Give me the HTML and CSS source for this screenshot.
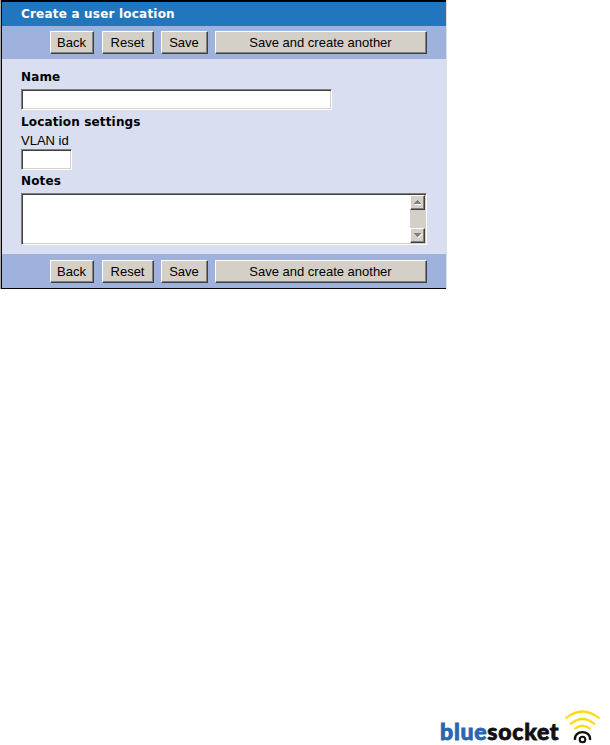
FILE: index.html
```html
<!DOCTYPE html>
<html>
<head>
    <meta charset="utf-8">
    <title>Create a user location</title>
    <link rel="stylesheet" href="styles.css">
</head>
<body>
<form class="panel">
    <h1>Create a user location</h1>
    <div class="toolbar">
        <button type="button" class="back">Back</button>
        <button type="reset" class="reset">Reset</button>
        <button type="submit" class="save">Save</button>
        <button type="submit" class="another">Save and create another</button>
    </div>
    <div class="fields">
        <label class="title" for="name">Name</label>
        <input type="text" id="name" class="name">
        <h2 class="title settings">Location settings</h2>
        <label class="vlan-label" for="vlan">VLAN id</label>
        <input type="text" id="vlan" class="vlan">
        <label class="title notes-label" for="notes">Notes</label>
        <div class="notes">
            <textarea id="notes"></textarea>
            <div class="scrollbar">
                <span class="arrow"><svg width="7" height="5" viewBox="0 0 7 5" shape-rendering="crispEdges"><path d="M1 4h6v1H1z" fill="#fff"/><path d="M3 0h1v1h1v1h1v1h1v1H0V3h1V2h1V1h1z" fill="#808080"/></svg></span>
                <span class="arrow"><svg width="8" height="5" viewBox="0 0 8 5" shape-rendering="crispEdges"><path d="M7 1h1L4 5V4z" fill="#fff"/><path d="M0 0h7v1H6v1H5v1H4v1H3V3H2V2H1V1H0z" fill="#808080"/></svg></span>
            </div>
        </div>
    </div>
    <div class="toolbar bottom">
        <button type="button" class="back">Back</button>
        <button type="reset" class="reset">Reset</button>
        <button type="submit" class="save">Save</button>
        <button type="submit" class="another">Save and create another</button>
    </div>
</form>

<div class="logo">
    <span class="word"><span class="blue">blue</span>socket</span>
    <svg class="waves" width="38" height="36" viewBox="0 0 38 36" fill="none">
        <g stroke="#fbdc14" stroke-width="2.2">
            <path d="M1.5 9.5Q18.5-4.5 35.5 9.5"/>
            <path d="M6 15.5Q18.5 4.5 31 15.5"/>
            <path d="M10.5 20Q18.5 13.5 26.5 20"/>
        </g>
        <path d="M11 31C9.5 20.5 27.5 20.5 26 31" stroke="#111" stroke-width="2.3"/>
        <circle cx="18.5" cy="30.5" r="2.8" stroke="#111" stroke-width="2.1"/>
    </svg>
</div>
</body>
</html>
```
FILE: styles.css
```css
* { box-sizing: border-box; }
body { margin: 0; height: 745px; background: #fff; display: flex; flex-direction: column; justify-content: space-between; font-family: "Liberation Sans", Arial, sans-serif; color: #000; }
.panel { width: 447px; height: 289px; border-left: 1px solid #aaa; border-right: 1px solid #ddd; background: #d9def0; }
h1 { margin: 0; height: 26px; padding-left: 19px; border-top: 2px solid #000; border-left: 1px solid #000; background: #2176bd; color: #fff; font: bold 12px/24px "DejaVu Sans", Verdana, sans-serif; letter-spacing: 0.2px; }
.toolbar { display: flex; height: 33px; padding: 5px 0 0 48px; border-left: 1px solid #000; background: #9eb2dd; }
.toolbar.bottom { height: 35px; padding-top: 6px; border-bottom: 1px solid #000; }
button { height: 23px; padding: 1px 1px 0 0; border: 1px solid; border-color: #fff #404040 #404040 #fff; border-radius: 0; background: #d4d0c8; box-shadow: inset -1px -1px #808080; color: #000; font: 13px/20px "Liberation Sans", Arial, sans-serif; white-space: nowrap; }
.back { width: 44px; margin-right: 8px; }
.reset { width: 52px; margin-right: 7px; }
.save { width: 47px; margin-right: 7px; }
.another { width: 212px; }
.fields { display: flex; flex-direction: column; align-items: flex-start; height: 195px; padding: 9px 0 0 19px; border-left: 1px solid #000; }
.title { margin: 0; height: 18px; font: bold 12px/18px "DejaVu Sans", Verdana, sans-serif; letter-spacing: 0.15px; }
input, .notes { border: 1px solid; border-color: #808080 #fff #fff #808080; border-radius: 0; background: #fff; box-shadow: inset 1px 1px #404040, inset -1px -1px #d4d0c8; }
input { height: 21px; padding: 2px 4px; font-size: 14px; outline: none; }
.name { width: 311px; margin-top: 3px; }
.settings { margin-top: 3px; }
.vlan-label { height: 18px; font-size: 13px; line-height: 19px; }
.vlan { width: 51px; }
.notes-label { margin-top: 2px; }
.notes { display: flex; width: 406px; height: 52px; margin-top: 3px; padding: 1px; }
textarea { flex: 1; border: 0; padding: 2px; background: transparent; resize: none; outline: none; overflow: hidden; }
.scrollbar { display: flex; flex-direction: column; justify-content: space-between; width: 15px; background: #d4d0c8; }
.arrow { display: flex; align-items: center; justify-content: center; height: 15px; border: 1px solid; border-color: #fff #404040 #404040 #fff; box-shadow: inset -1px -1px #808080; }
.logo { display: flex; align-items: flex-start; height: 36px; padding-left: 440px; }
.word { width: 120px; margin-right: 4px; padding-top: 8px; font: 900 23px/28px Lato, "Liberation Sans", sans-serif; letter-spacing: 0.75px; -webkit-text-stroke: 0.8px; color: #111; white-space: nowrap; }
.blue { color: #2866b1; }
.waves { flex: none; }
```
